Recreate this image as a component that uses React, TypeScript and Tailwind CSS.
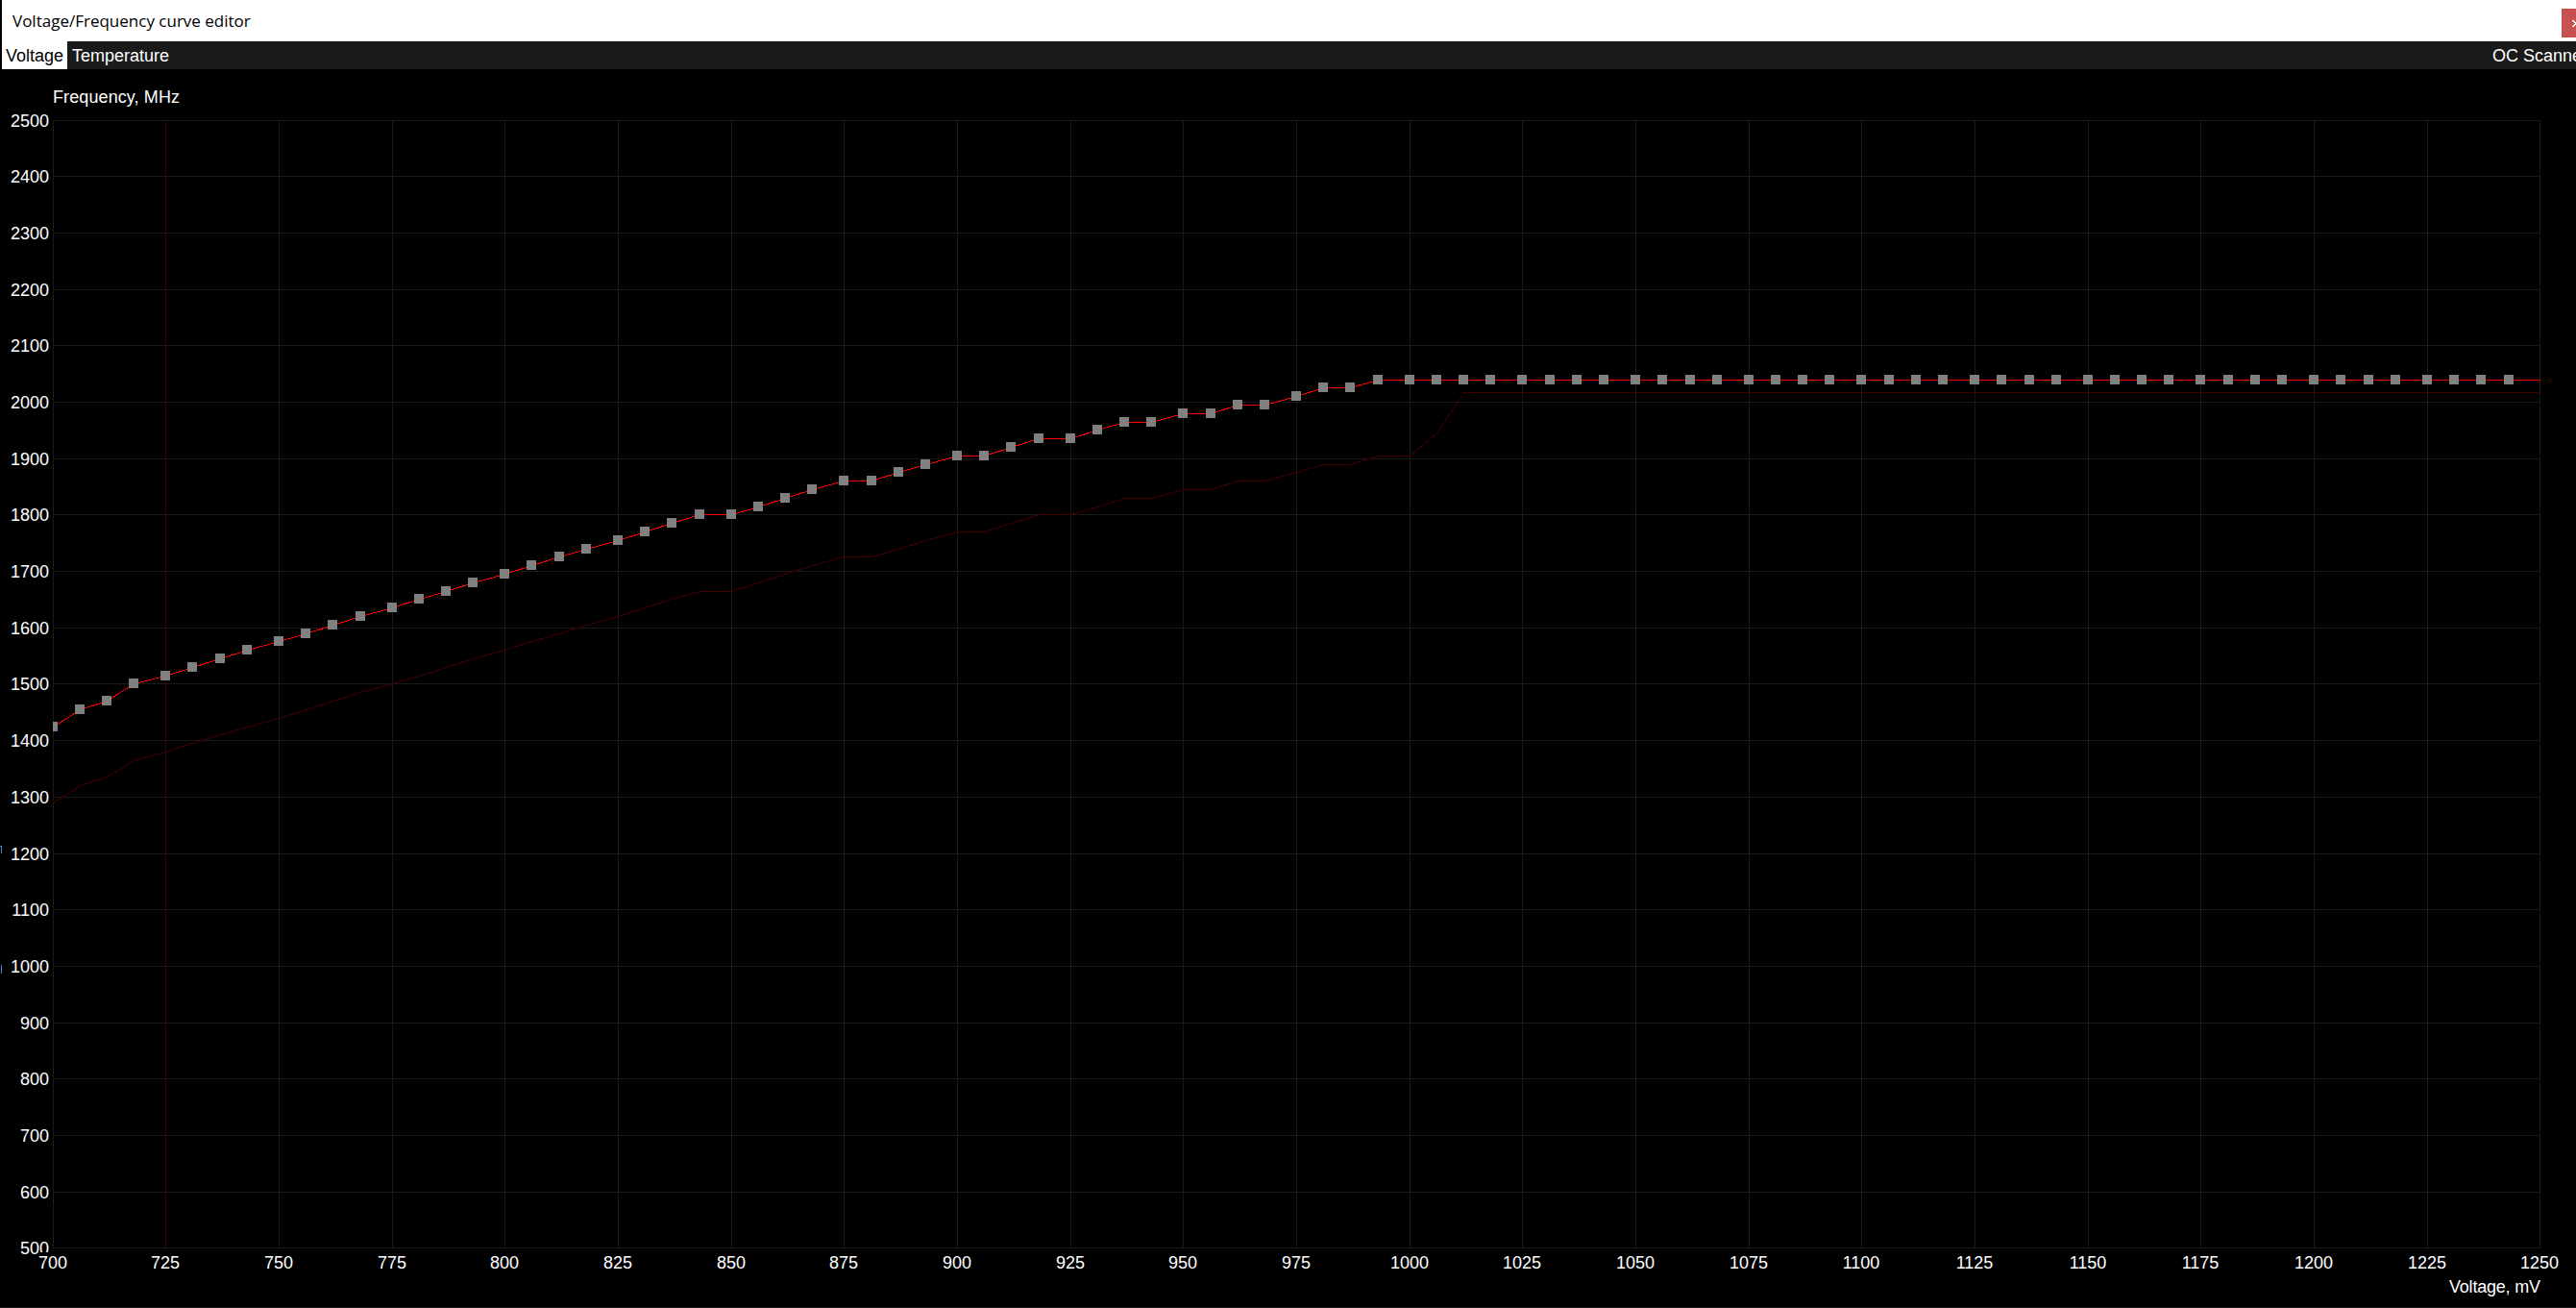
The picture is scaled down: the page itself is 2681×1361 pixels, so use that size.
import type { ReactNode } from "react";

const LEFT = 55;
const TOP = 125;
const PX_PER_MV = 4.7072;
const PX_PER_MHZ = 0.586985;

const xOf = (mv: number) => Math.floor(LEFT + (mv - 700) * PX_PER_MV);
const yOf = (mhz: number) => Math.floor(TOP + (2500 - mhz) * PX_PER_MHZ);

// The driver exposes a point every 6.25 mV, truncated to whole millivolts
const voltages = Array.from({ length: 89 }, (_, i) => Math.floor(700 + i * 6.25));

const rising = [
  1425, 1455, 1470, 1500, 1515, 1530, 1545, 1560, 1575, 1590, 1605, 1620,
  1635, 1650, 1665, 1680, 1695, 1710, 1725, 1740, 1755, 1770, 1785, 1800,
  1800, 1815, 1830, 1845, 1860, 1860, 1875, 1890, 1905, 1905, 1920, 1935,
  1935, 1950, 1965, 1965, 1980, 1980, 1995, 1995, 2010, 2025, 2025, 2040,
];

const curve = voltages.map((mv, i) => ({ mv, mhz: rising[i] ?? 2040 }));

const stockCurve = voltages.map((mv, i) => {
  if (i < rising.length) return { mv, mhz: rising[i] - 135 };
  if (mv === 1000) return { mv, mhz: 1905 };
  if (mv === 1006) return { mv, mhz: 1945 };
  return { mv, mhz: 2017 };
});

const voltageTicks = Array.from({ length: 23 }, (_, i) => 700 + i * 25);
const frequencyTicks = Array.from({ length: 21 }, (_, i) => 2500 - i * 100);

const toPoints = (points: { mv: number; mhz: number }[]) =>
  points.map((p) => `${xOf(p.mv) + 0.5},${yOf(p.mhz) + 0.5}`).join(" ");

function TitleBar() {
  return (
    <header className="flex h-[43px] justify-between bg-white">
      <h1 className="pl-[11px] pt-[10px] font-['Open_Sans','Noto_Sans',sans-serif] text-[17px] leading-6 text-black">
        Voltage/Frequency curve editor
      </h1>
      <button
        aria-label="Close"
        className="mt-[9px] flex h-[30px] w-[15px] items-center justify-end overflow-hidden bg-[#c75050]"
      >
        <svg width="4" height="7" viewBox="0 0 4 7" shapeRendering="crispEdges">
          <path d="M0 0h2v1h1v1h1v3h-1v1h-1v1h-2v-1h1v-1h1v-1h1v-1h-1v-1h-1v-1h-1z" fill="#fff" />
        </svg>
      </button>
    </header>
  );
}

function Tab({ active, children }: { active?: boolean; children: ReactNode }) {
  return (
    <button
      className={`h-[29px] pt-px text-left text-[18px] leading-7 ${
        active ? "w-[68px] bg-white pl-1 text-black" : "pl-[5px] text-white"
      }`}
    >
      {children}
    </button>
  );
}

function Chart() {
  return (
    <svg
      className="absolute left-0 top-0"
      width="2681"
      height="1361"
      viewBox="0 0 2681 1361"
      fontSize="18"
    >
      <defs>
        <clipPath id="plot">
          <rect x="55" y="125" width="2589" height="1174" />
        </clipPath>
      </defs>

      <g shapeRendering="crispEdges" fill="#1a1a1a">
        {voltageTicks.map((mv) => (
          <rect key={mv} x={xOf(mv)} y="125" width="1" height="1174" />
        ))}
        {frequencyTicks.map((mhz) => (
          <rect key={mhz} x="55" y={yOf(mhz)} width="2589" height="1" />
        ))}
      </g>

      <g clipPath="url(#plot)" shapeRendering="crispEdges" fill="none">
        {/* current voltage marker */}
        <path d="M172.5 125V1299" stroke="#400000" strokeDasharray="3 1" />
        <polyline points={toPoints(stockCurve)} stroke="#400000" />
        <polyline points={toPoints(curve)} stroke="#ff0000" />
        {curve.slice(0, -1).map((p) => (
          <rect
            key={p.mv}
            x={xOf(p.mv) - 5}
            y={yOf(p.mhz) - 5}
            width="10"
            height="10"
            fill="#808080"
          />
        ))}
        <rect x="55" y="1249" width="1" height="1" fill="#a02020" />
      </g>

      <g fill="#fff">
        <text x="55" y="107" textLength="132">
          Frequency, MHz
        </text>
        {frequencyTicks.map((mhz) => (
          <text key={mhz} x="51" y={yOf(mhz) + 7} textAnchor="end">
            {mhz}
          </text>
        ))}
        <rect x="40" y="1303" width="30" height="18" fill="#000" />
        {voltageTicks.map((mv) => (
          <text key={mv} x={xOf(mv)} y="1320" textAnchor="middle">
            {mv}
          </text>
        ))}
        <text x="2549" y="1345" textLength="95">
          Voltage, mV
        </text>
      </g>

      {/* slivers of the window underneath */}
      <g fill="#4a86c8" shapeRendering="crispEdges">
        <path d="M0 880h2v8h-1v-7h-1zM1 1004h1v9h-1z" />
      </g>
      <path d="M0 1360h2681v1H0z" fill="#1a1a1a" />
    </svg>
  );
}

export default function App() {
  return (
    <div className="relative h-[1361px] w-[2681px] overflow-hidden bg-black pl-[2px] font-['Liberation_Sans',Arial,sans-serif]">
      <TitleBar />
      <nav className="flex h-[29px] justify-between bg-[#1a1a1a]">
        <div className="flex">
          <Tab active>Voltage</Tab>
          <Tab>Temperature</Tab>
        </div>
        <div className="w-[87px] overflow-hidden whitespace-nowrap pt-px text-[18px] leading-7 text-white">
          OC Scanner
        </div>
      </nav>
      <Chart />
    </div>
  );
}
